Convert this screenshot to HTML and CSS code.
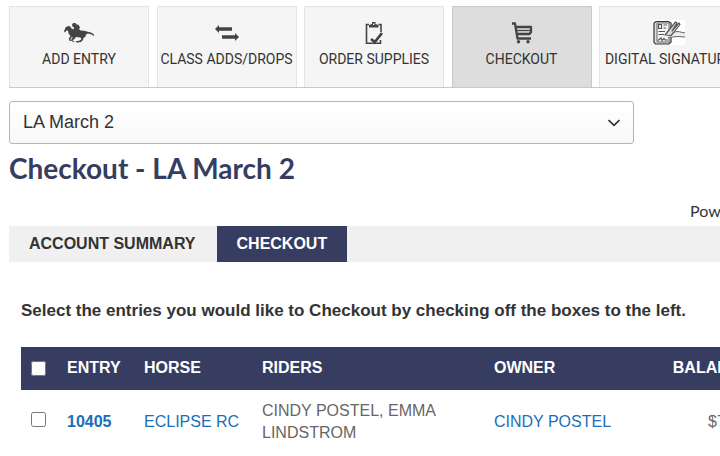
FILE: index.html
```html
<!DOCTYPE html>
<html lang="en">
<head>
<meta charset="utf-8">
<title>Checkout - LA March 2</title>
<link rel="stylesheet" href="styles.css">
</head>
<body>
<div class="page">
  <nav class="actions">
    <a class="action" href="#">
      <svg class="icon" viewBox="0 0 32 26" aria-hidden="true"><path fill="#444" d="M1 9.500 2.500 5.500 5 4 7 4.300 8.500 6.500 10.500 7.500 11 5.500 9.500 4.500 9 3 9.500 1.500 11 1 12.500 1 13.500 2.500 15.500 2.800 17 5.500 16 7 17.500 8.500 21 8.800 24 9.500 28 10.500 31 12.500 31 14 28 12.300 25 11.500 23 12.500 22.500 14.500 20.500 16 20 18 18 20 14.500 20.500 12.500 20.300 13 19.300 17 18.500 18.500 17 17.500 15.500 13 15 11.500 17 9.500 18.300 11.500 19.700 10.500 20.200 8 18.500 8.500 17 10 15.500 8.500 15.200 7.500 17.300 8 19 6.500 19 5.800 16.500 7.500 14 5.500 11.500 5 8.500 3.200 8.800 2 10.500Z"/></svg>
      <span>ADD ENTRY</span>
    </a>
    <a class="action" href="#">
      <svg class="icon" viewBox="0 0 32 26" aria-hidden="true"><path fill="#444" d="M4 7 8 3V5.200H21V8.800H8V11ZM28 15 24 11V13.200H11V16.800H24V19Z"/></svg>
      <span>CLASS ADDS/DROPS</span>
    </a>
    <a class="action" href="#">
      <svg class="icon" viewBox="0 0 32 26" aria-hidden="true"><g fill="none" stroke="#444"><path stroke-width="1.600" d="M11 2.500H8.500V21.300H22.500V18M20.500 2.500H23V10"/><path stroke-width="2.800" d="M13 17 16.800 20 24 11"/></g><path fill="#444" d="M11 5.500V3L14 2V0H17.500V2L20.500 3V5.500Z"/><path fill="#f5f5f5" d="M15 1.500H16.500V3H15Z"/></svg>
      <span>ORDER SUPPLIES</span>
    </a>
    <a class="action action-current" href="#">
      <svg class="icon" viewBox="0 0 32 26" aria-hidden="true"><g fill="none" stroke="#444" stroke-width="2.300" stroke-linejoin="round"><path d="M6 1.500H9L11.500 16.500H25M9.500 5H25V10L23.500 12H10.500"/><path stroke-width="1.300" d="M10 8.500H25"/></g><circle cx="12.500" cy="19.800" r="1.700" fill="#444"/><circle cx="22" cy="19.800" r="1.700" fill="#444"/></svg>
      <span>CHECKOUT</span>
    </a>
    <a class="action" href="#">
      <svg class="icon" viewBox="0 0 32 26" aria-hidden="true"><path fill="#fff" d="M0-2H32V23H0Z"/><path fill="#ddd" stroke="#333" stroke-width="1.200" d="M3-.500H15.500L18 1V20L16 22H2.500L1 20.500V1Z"/><path fill="#f5f5f5" stroke="#666" d="M4 1H16V20H4Z"/><path fill="none" stroke="#555" stroke-width="1.200" d="M5.500 2.500H8.500V6.500H5.500ZM10.500 3H14M10.500 6H13M5.500 9.500H12M5.500 12.500H11M5 18.500 8 16 9 18.500 11 16.500 12 18H15"/><path fill="#eee" d="M21 10 25 9.500 32 11V15L24 14.500 15 15.500 12 13Z"/><path fill="#ddd" stroke="#555" stroke-width="1.200" stroke-linejoin="round" d="M12 13 22.500 0 24 1 19 9 26 1 27 2.500 21 10 18 13.500Z"/><path fill="none" stroke="#666" d="M21 10 25 9.500 32 11M15 15.500 24 14.500 32 15"/></svg>
      <span>DIGITAL SIGNATURE</span>
    </a>
  </nav>

  <div class="show-picker">
    <select class="show-select" aria-label="Show"><option>LA March 2</option></select>
    <svg class="chevron" viewBox="0 0 12 8" aria-hidden="true"><path fill="none" stroke="#333" stroke-width="1.700" d="M.500 1 6 6.300 11.500 1"/></svg>
  </div>

  <h1 class="title">Checkout - LA March 2</h1>
  <p class="powered">Powered by</p>

  <div class="tabs">
    <button class="tab" type="button">ACCOUNT SUMMARY</button>
    <button class="tab tab-current" type="button">CHECKOUT</button>
  </div>

  <main class="panel">
    <h2 class="hint">Select the entries you would like to Checkout by checking off the boxes to the left.</h2>
    <table class="entries">
      <colgroup><col class="col-check"><col class="col-entry"><col class="col-horse"><col class="col-riders"><col class="col-owner"><col class="col-balance"></colgroup>
      <thead>
        <tr>
          <th><input type="checkbox" aria-label="Select all entries"></th>
          <th>ENTRY</th><th>HORSE</th><th>RIDERS</th><th>OWNER</th><th class="amount">BALANCE</th>
        </tr>
      </thead>
      <tbody>
        <tr>
          <td><input type="checkbox" aria-label="Select entry 10405"></td>
          <td><a class="entry-link" href="#">10405</a></td>
          <td><a href="#">ECLIPSE RC</a></td>
          <td class="riders">CINDY POSTEL, EMMA LINDSTROM</td>
          <td class="owner"><a href="#">CINDY POSTEL</a></td>
          <td class="amount">$75.00</td>
        </tr>
      </tbody>
    </table>
  </main>
</div>
</body>
</html>
```
FILE: styles.css
```css
* { box-sizing: border-box; }

body {
  margin: 0;
  background: #fff;
  color: #333;
  font-family: "Liberation Sans", Arial, sans-serif;
  font-size: 16px;
  line-height: 22px;
  overflow: hidden;
}

.page {
  padding: 6px 0 0 9px;
}

a { color: #1a6fba; text-decoration: none; }

/* Action bar: runs past the right edge on narrow windows */
.actions {
  display: flex;
  justify-content: space-between;
  width: 730px;
  border-bottom: 1px solid #c8c8c8;
}

.action {
  display: flex;
  flex-direction: column;
  align-items: center;
  width: 140px;
  height: 81px;
  padding-top: 15px;
  background: #f5f5f5;
  border: 1px solid #e4e4e4;
  border-bottom: 0;
  color: #333;
  font-family: Roboto, sans-serif;
  font-size: 14px;
  line-height: 22px;
  white-space: nowrap;
}

.action-current {
  background: #ddd;
  border-color: #c8c8c8;
}

.icon {
  width: 32px;
  height: 26px;
  overflow: visible;
}

.show-picker {
  display: grid;
  align-items: center;
  width: 625px;
  max-width: 100%;
  margin-top: 13px;
}

.show-select,
.chevron { grid-area: 1 / 1; }

.show-select {
  appearance: none;
  width: 100%;
  height: 43px;
  padding: 0 13px 2px;
  border: 1px solid #b5b5b5;
  border-radius: 3px;
  background: linear-gradient(#fff, #f8f8f8);
  color: #333;
  font-family: "Liberation Sans", Arial, sans-serif;
  font-size: 18px;
}

.chevron {
  justify-self: end;
  width: 12px;
  height: 8px;
  margin-right: 14px;
  pointer-events: none;
}

.title {
  margin: 7px 0 0;
  color: #363d61;
  font-family: Lato, sans-serif;
  font-size: 28px;
  font-weight: 700;
  line-height: 34px;
}

.powered {
  width: 800px;
  margin: 15px 0 4px;
  padding-left: 681px;
  font-family: Lato, sans-serif;
  font-size: 16px;
}

.tabs {
  display: flex;
  gap: 1px;
  background: #f0f0f0;
}

.tab {
  height: 36px;
  padding: 0 20px;
  border: 0;
  background: none;
  color: #333;
  font-family: "Liberation Sans", Arial, sans-serif;
  font-size: 16px;
  font-weight: 700;
}

.tab-current {
  background: #363d61;
  color: #fff;
}

.panel { padding: 38px 0 0 12px; }

.hint {
  margin: 0 0 25px;
  font-size: 17px;
  line-height: 22px;
  white-space: nowrap;
}

.entries {
  table-layout: fixed;
  width: 740px;
  border-collapse: collapse;
  color: #666;
}

.col-check { width: 36px; }
.col-entry { width: 77px; }
.col-horse { width: 118px; }
.col-riders { width: 232px; }
.col-owner { width: 140px; }

.entries th,
.entries td {
  padding: 10px;
  text-align: left;
  vertical-align: middle;
}

.entries th {
  padding: 10px 10px 11px;
  background: #363d61;
  color: #fff;
}

.entries .amount { text-align: right; }

.entries td.amount { padding-right: 4px; }

.entries .riders { padding-right: 40px; }

.entries .owner { white-space: nowrap; }

.entries input {
  display: block;
  width: 15px;
  height: 15px;
  margin: 0;
}

.entries td input { margin: 0 0 6px; }

.entry-link { font-weight: 700; }
```
